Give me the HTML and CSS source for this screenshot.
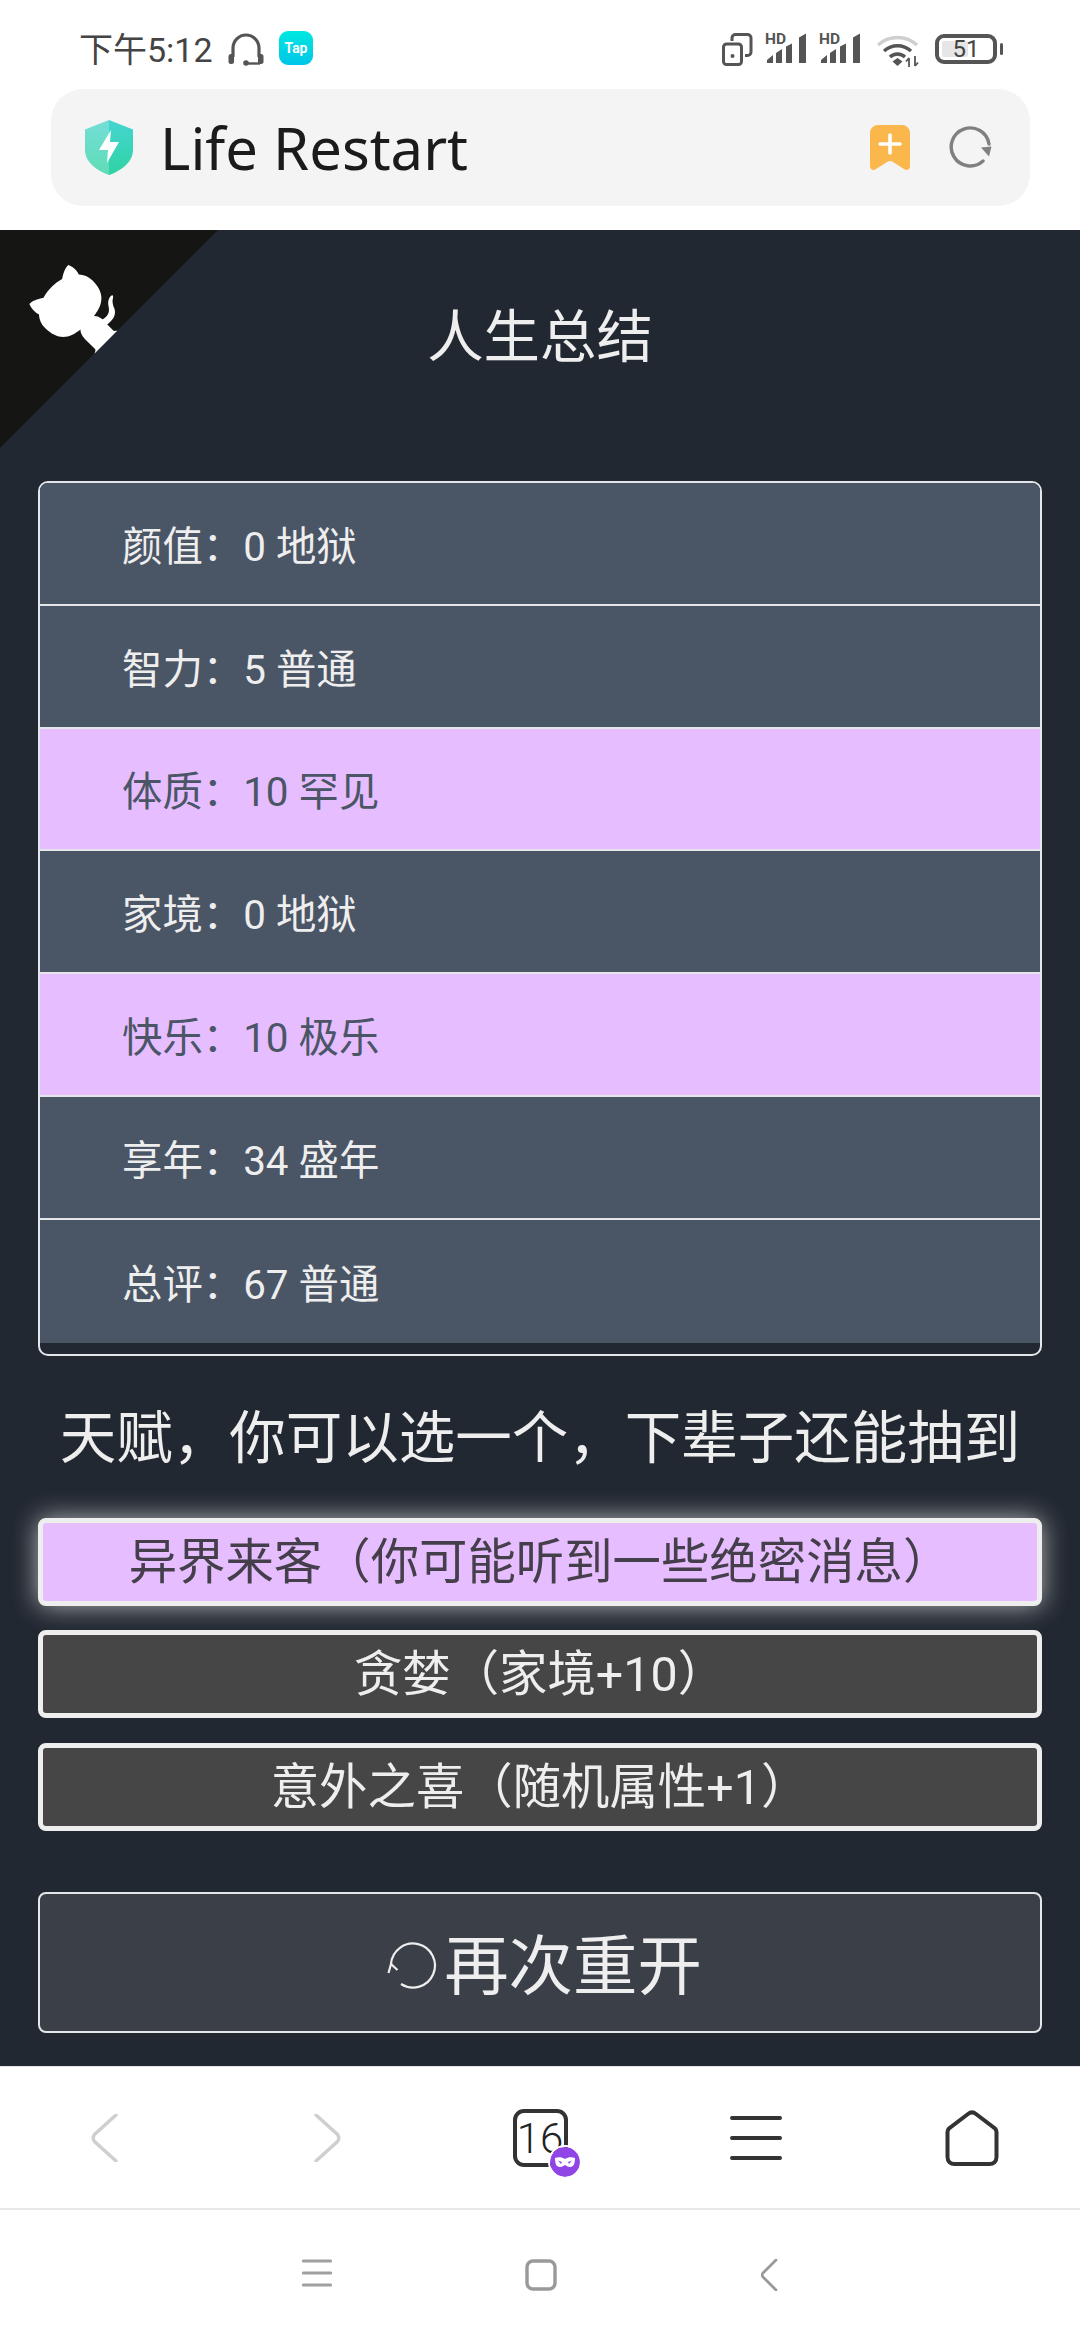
FILE: index.html
```html
<!DOCTYPE html>
<html lang="zh-CN">

<head>
    <meta charset="UTF-8">
    <meta name="viewport" content="width=device-width, initial-scale=1.0">
    <title>Life Restart</title>
    <link rel="stylesheet" href="styles.css">
</head>

<body>
    <div class="phone">
        <div class="status">
            <div class="status-left">
                <span class="clock">下午5:12</span>
                <svg class="ic-headset" width="36" height="33" viewBox="0 0 36 33">
                    <path d="M5 24V15a13 13 0 0 1 26 0v9" fill="none" stroke="#555" stroke-width="3.2"/>
                    <rect x="0.5" y="21" width="5.5" height="10" rx="2.5" fill="#555"/>
                    <rect x="30" y="21" width="5.5" height="10" rx="2.5" fill="#555"/>
                    <path d="M18 30.5h14" stroke="#555" stroke-width="2.4"/>
                    <circle cx="18" cy="30" r="2.8" fill="#555"/>
                </svg>
                <span class="tap-badge">Tap</span>
            </div>
            <div class="status-right">
                <svg class="ic-rotate" width="31" height="33" viewBox="0 0 31 33">
                    <rect x="1.5" y="11" width="18" height="20.5" rx="3" fill="none" stroke="#555" stroke-width="3"/>
                    <circle cx="10.5" cy="23" r="2" fill="#555"/>
                    <path d="M10 8V5a3.5 3.5 0 0 1 3.5-3.500h12A3.500 3.500 0 0 1 29 5v14a3.500 3.500 0 0 1-3.500 3.500H23" fill="none" stroke="#555" stroke-width="3"/>
                </svg>
                <svg class="ic-signal" width="42" height="38" viewBox="0 -6 42 38">
                    <text class="hd" x="0" y="12">HD</text>
                    <path d="M2 31v-3l6-5v8zM11 31V21l6-4v14zM21 31V14.500l6-3V31zM34 31V5.500l7-4V31z" fill="#555"/>
                </svg>
                <svg class="ic-signal" width="42" height="38" viewBox="0 -6 42 38">
                    <text class="hd" x="0" y="12">HD</text>
                    <path d="M2 31v-3l6-5v8zM11 31V21l6-4v14zM21 31V14.500l6-3V31zM34 31V5.500l7-4V31z" fill="#555"/>
                </svg>
                <svg class="ic-wifi" width="43" height="34" viewBox="0 0 43 34">
                    <path d="M2 11C13 1 30 1 41 11" fill="none" stroke="#cfcfcf" stroke-width="3.400"/>
                    <path d="M8 17C16 10 27 10 35 17" fill="none" stroke="#555" stroke-width="3.400"/>
                    <path d="M14 23C18 19 25 19 29 23" fill="none" stroke="#555" stroke-width="3.400"/>
                    <path d="M16.500 27.500L21.500 24l5 3.500L21.500 32z" fill="#555"/>
                    <path d="M33 24v9M30 27.500l3-3.500M39 22v10M39 32l3-3.500" stroke="#555" stroke-width="1.800" fill="none"/>
                </svg>
                <div class="battery">
                    <div class="battery-body">
                        <div class="battery-fill"></div>
                        <span class="battery-num">51</span>
                    </div>
                    <div class="battery-nub"></div>
                </div>
            </div>
        </div>

        <div class="urlwrap">
            <div class="urlbar">
                <svg class="ic-shield" width="48" height="55" viewBox="0 0 48 55">
                    <defs>
                        <linearGradient id="shieldL" x1="0" y1="0" x2="0" y2="1">
                            <stop offset="0" stop-color="#73ded8"/>
                            <stop offset="1" stop-color="#5fdcb5"/>
                        </linearGradient>
                        <linearGradient id="shieldR" x1="0" y1="0" x2="0" y2="1">
                            <stop offset="0" stop-color="#45d5d2"/>
                            <stop offset="1" stop-color="#2fd3a2"/>
                        </linearGradient>
                    </defs>
                    <path d="M24 0L0 9.500V30C0 42 12 51 24 55z" fill="url(#shieldL)"/>
                    <path d="M24 0l24 9.500V30C48 42 36 51 24 55z" fill="url(#shieldR)"/>
                    <path d="M26 10L14 30h9l-1 13 12-21h-9z" fill="#fff"/>
                </svg>
                <span class="url-title">Life Restart</span>
                <svg class="ic-bookmark" width="40" height="45" viewBox="0 0 40 45">
                    <path d="M8 0h24a8 8 0 0 1 8 8v33c0 4-3.500 5-6 3l-11-7c-2-1.200-4-1.200-6 0L6 44c-2.500 2-6 1-6-3V8a8 8 0 0 1 8-8z" fill="#fab74b"/>
                    <path d="M20 10v18M10 19h20" stroke="#fff" stroke-width="3.600" stroke-linecap="round"/>
                </svg>
                <svg class="ic-reload" width="43" height="43" viewBox="0 0 43 43">
                    <path d="M40 18A19 19 0 1 0 34 35" fill="none" stroke="#808080" stroke-width="3.400" stroke-linecap="round"/>
                    <path d="M32 21.500l10.500-1-2.500 10z" fill="#808080"/>
                </svg>
            </div>
        </div>

        <main class="page">
            <svg class="corner" width="218" height="218" viewBox="0 0 250 250">
                <path d="M0,0 L115,115 L130,115 L142,142 L250,250 L250,0 Z" fill="#151513"/>
                <path d="M128.3,109.0 C113.8,99.7 119.0,89.6 119.0,89.6 C122.0,82.7 120.5,78.6 120.5,78.6 C119.2,72.0 123.4,76.3 123.4,76.3 C127.3,80.9 125.5,87.3 125.5,87.3 C122.9,97.6 130.6,101.9 134.4,103.2" fill="#fff"/>
                <path d="M115.0,115.0 C114.9,115.1 118.7,116.5 119.8,115.4 L133.7,101.6 C136.9,99.2 139.9,98.4 142.2,98.6 C133.8,88.0 127.5,74.4 143.8,58.0 C148.5,53.4 154.0,51.2 159.7,51.0 C160.3,49.4 163.2,43.6 171.4,40.1 C171.4,40.1 176.1,42.5 178.8,56.2 C183.1,58.6 187.2,61.8 190.9,65.4 C194.5,69.0 197.7,73.2 200.1,77.6 C213.8,80.2 216.3,84.9 216.3,84.9 C212.7,93.1 206.9,96.0 205.4,96.6 C205.1,102.4 203.0,107.8 198.3,112.5 C181.9,128.9 168.3,122.5 157.7,114.1 C157.9,116.9 156.7,120.9 152.7,124.9 L141.0,136.5 C139.8,137.7 141.6,141.9 141.8,141.8 Z" fill="#fff"/>
            </svg>

            <h1 class="page-title">人生总结</h1>

            <ul class="summary">
                <li class="summary-row">颜值：0 地狱</li>
                <li class="summary-row">智力：5 普通</li>
                <li class="summary-row hot">体质：10 罕见</li>
                <li class="summary-row">家境：0 地狱</li>
                <li class="summary-row hot">快乐：10 极乐</li>
                <li class="summary-row">享年：34 盛年</li>
                <li class="summary-row">总评：67 普通</li>
            </ul>

            <h2 class="talent-title">天赋，你可以选一个，下辈子还能抽到</h2>

            <div class="talents">
                <div class="talent picked">异界来客（你可能听到一些绝密消息）</div>
                <div class="talent">贪婪（家境+10）</div>
                <div class="talent">意外之喜（随机属性+1）</div>
            </div>

            <div class="restart">
                <svg class="ic-restart" width="60" height="60" viewBox="0 0 60 60">
                    <path d="M7 28A22 22 0 1 1 17 48" fill="none" stroke="#eee" stroke-width="2.200"/>
                    <path d="M4.500 37L7 28l6.500 6" fill="none" stroke="#eee" stroke-width="2.200"/>
                </svg>
                <span>再次重开</span>
            </div>
        </main>

        <nav class="browser-nav">
            <svg width="48" height="48" viewBox="0 0 48 48">
                <path d="M32 1L10.500 20.500c-1.500 2-1.500 5 0 7L32 47" fill="none" stroke="#cfcfcf" stroke-width="3.400" stroke-linecap="round"/>
            </svg>
            <svg width="48" height="48" viewBox="0 0 48 48">
                <path d="M16 1l21.500 19.500c1.500 2 1.500 5 0 7L16 47" fill="none" stroke="#cfcfcf" stroke-width="3.400" stroke-linecap="round"/>
            </svg>
            <div class="tabs">
                <span class="tabs-num">16</span>
                <svg class="tabs-mask" width="30" height="30" viewBox="0 0 30 30">
                    <circle cx="15" cy="15" r="15" fill="#9145e6"/>
                    <path d="M5 11c3-1 7-1 10 1 3-2 7-2 10-1 0 5-1 9-5 9-2 0-3-1-5-2-2 1-3 2-5 2-4 0-5-4-5-9z" fill="#fff"/>
                    <path d="M8 13.500l4 1.500-1 2zM22 13.500l-4 1.500 1 2z" fill="#9145e6"/>
                </svg>
            </div>
            <svg width="54" height="44" viewBox="0 0 54 44">
                <path d="M3 2h48M3 22h48M3 42h48" stroke="#333" stroke-width="4" stroke-linecap="round"/>
            </svg>
            <svg width="54" height="56" viewBox="0 0 54 56">
                <path d="M2.500 22c0-1.500.5-2.500 1.500-3.500L23 4c2.500-2 5.500-2 8 0l19 14.500c1 1 1.500 2 1.500 3.500v25c0 4.500-3 7-7 7H9.500c-4 0-7-2.500-7-7z" fill="none" stroke="#333" stroke-width="4"/>
            </svg>
        </nav>

        <nav class="system-nav">
            <svg width="30" height="28" viewBox="0 0 30 28">
                <path d="M1.500 2h27M1.500 14h27M1.500 26h27" stroke="#a0a0a0" stroke-width="3.200" stroke-linecap="round"/>
            </svg>
            <svg width="32" height="32" viewBox="0 0 32 32">
                <rect x="2" y="2" width="28" height="28" rx="6" fill="none" stroke="#999" stroke-width="3.400"/>
            </svg>
            <svg class="sys-back" width="18" height="32" viewBox="0 0 18 32">
                <path d="M16 1L3 14c-1 1-1 3 0 4l13 13" fill="none" stroke="#999" stroke-width="2.800" stroke-linecap="round"/>
            </svg>
        </nav>
    </div>
</body>

</html>
```

FILE: styles.css
```css
:root {
    --col-page: #222831;
    --col-row: #4a5565;
    --col-hot: #e6bdff;
    --col-line: #e4e6e9;
    --col-text: #eeeeee;
    --col-talent: #464646;
    --col-restart: #3b3f48;
    --font-main: Roboto, "Noto Sans CJK SC", sans-serif;
}

* {
    box-sizing: border-box;
}

body {
    margin: 0;
    background: #fff;
    font-family: var(--font-main);
}

.phone {
    width: 1080px;
    height: 2340px;
    display: flex;
    flex-direction: column;
    overflow: hidden;
}

/* status bar */
.status {
    height: 89px;
    padding: 31px 77px 0 79px;
    display: flex;
    justify-content: space-between;
    align-items: flex-start;
    color: #444;
}

.status-left,
.status-right {
    display: flex;
    align-items: flex-start;
}

.clock {
    font-size: 34px;
    line-height: 38px;
    width: 149px;
}

.ic-headset {
    margin-top: 2px;
}

.tap-badge {
    width: 34px;
    height: 34px;
    margin-left: 15px;
    border-radius: 9px;
    background: linear-gradient(#00e8e0, #00c4e8);
    color: #fff;
    font-size: 14px;
    font-weight: 700;
    line-height: 34px;
    text-align: center;
}

.ic-rotate {
    margin-top: 2px;
}

.ic-signal {
    margin-left: 12px;
    margin-top: -5px;
}

.ic-signal:first-of-type {
    margin-left: 0;
}

.hd {
    font-size: 15.5px;
    font-weight: 700;
    fill: #555;
}

.ic-wifi {
    margin-left: 15px;
    margin-top: 3px;
}

.battery {
    margin-left: 16px;
    margin-top: 3px;
    display: flex;
    align-items: center;
}

.battery-body {
    position: relative;
    width: 62px;
    height: 30px;
    border: 4px solid #555;
    border-radius: 9px;
    display: flex;
    align-items: center;
    justify-content: center;
}

.battery-fill {
    position: absolute;
    left: 3px;
    top: 3px;
    bottom: 3px;
    width: 26px;
    border-radius: 2px;
    background: #e6e6e6;
}

.battery-num {
    position: relative;
    font-size: 24px;
    line-height: 22px;
    color: #444;
}

.battery-nub {
    width: 3px;
    height: 12px;
    margin-left: 3px;
    border-radius: 2px;
    background: #555;
}

/* address bar */
.urlwrap {
    height: 141px;
    padding: 0 50px 0 51px;
}

.urlbar {
    height: 117px;
    padding: 0 24px 0 34px;
    display: flex;
    align-items: center;
    border-radius: 32px;
    background: #f4f4f4;
}

.url-title {
    flex: 1;
    margin-left: 27px;
    font-size: 58px;
    color: #1b1b1b;
    font-family: "Noto Sans", sans-serif;
    font-weight: 400;
}

.ic-reload {
    margin-left: 39px;
    margin-right: 14px;
}

/* page */
.page {
    position: relative;
    height: 1836px;
    padding: 0 38px;
    background: var(--col-page);
    color: var(--col-text);
}

.corner {
    position: absolute;
    left: 0;
    top: 0;
    transform: scale(-1, 1);
}

.page-title {
    margin: 0 0 103px;
    padding-top: 68px;
    font-size: 56.4px;
    font-weight: 400;
    line-height: 80px;
    text-align: center;
}

.summary {
    list-style: none;
    margin: 0;
    padding: 0 0 11px;
    border: 2px solid var(--col-line);
    border-radius: 10px;
    overflow: hidden;
}

.summary-row {
    height: 122.8px;
    padding-left: 82px;
    display: flex;
    align-items: center;
    background: var(--col-row);
    border-bottom: 2px solid var(--col-line);
    font-size: 40.4px;
}

.summary-row:last-child {
    border-bottom: 0;
}

.hot {
    background: var(--col-hot);
    color: var(--col-row);
}

.talent-title {
    margin: 43px 0 39px;
    font-size: 56.5px;
    font-weight: 400;
    line-height: 80px;
    text-align: center;
    white-space: nowrap;
}

.talents {
    display: flex;
    flex-direction: column;
    gap: 24.5px;
}

.talent {
    height: 88px;
    padding-bottom: 8px;
    display: flex;
    align-items: center;
    justify-content: center;
    border: 5px solid var(--col-text);
    border-radius: 8px;
    background: var(--col-talent);
    font-size: 48.4px;
}

.picked {
    background: var(--col-hot);
    color: #443f4a;
    box-shadow: 0 0 26px rgba(255, 255, 255, 0.65);
}

.restart {
    height: 141px;
    margin-top: 61px;
    padding: 0 0 2px 6px;
    display: flex;
    align-items: center;
    justify-content: center;
    border: 2px solid var(--col-line);
    border-radius: 8px;
    background: var(--col-restart);
    font-size: 64.4px;
}

.ic-restart {
    margin-top: 10px;
}

/* browser buttons */
.browser-nav {
    height: 144px;
    display: grid;
    grid-template-columns: repeat(5, 216px);
    justify-items: center;
    align-items: center;
    border-top: 1px solid #e8e8e8;
    border-bottom: 2px solid #e8e8e8;
}

.tabs {
    position: relative;
    width: 55px;
    height: 58px;
    padding-top: 3px;
    border: 4px solid #333;
    border-radius: 11px;
    display: flex;
    align-items: center;
    justify-content: center;
}

.tabs-num {
    font-size: 42px;
    font-weight: 300;
    color: #222;
    line-height: 1;
}

.tabs-mask {
    position: absolute;
    right: -18px;
    bottom: -16px;
    box-sizing: content-box;
    border: 2px solid #fff;
    border-radius: 50%;
}

.system-nav {
    flex: 1;
    padding: 49px 0 0 302px;
    display: flex;
    align-items: flex-start;
    gap: 193px;
}

.sys-back {
    margin-left: 10px;
}
```
